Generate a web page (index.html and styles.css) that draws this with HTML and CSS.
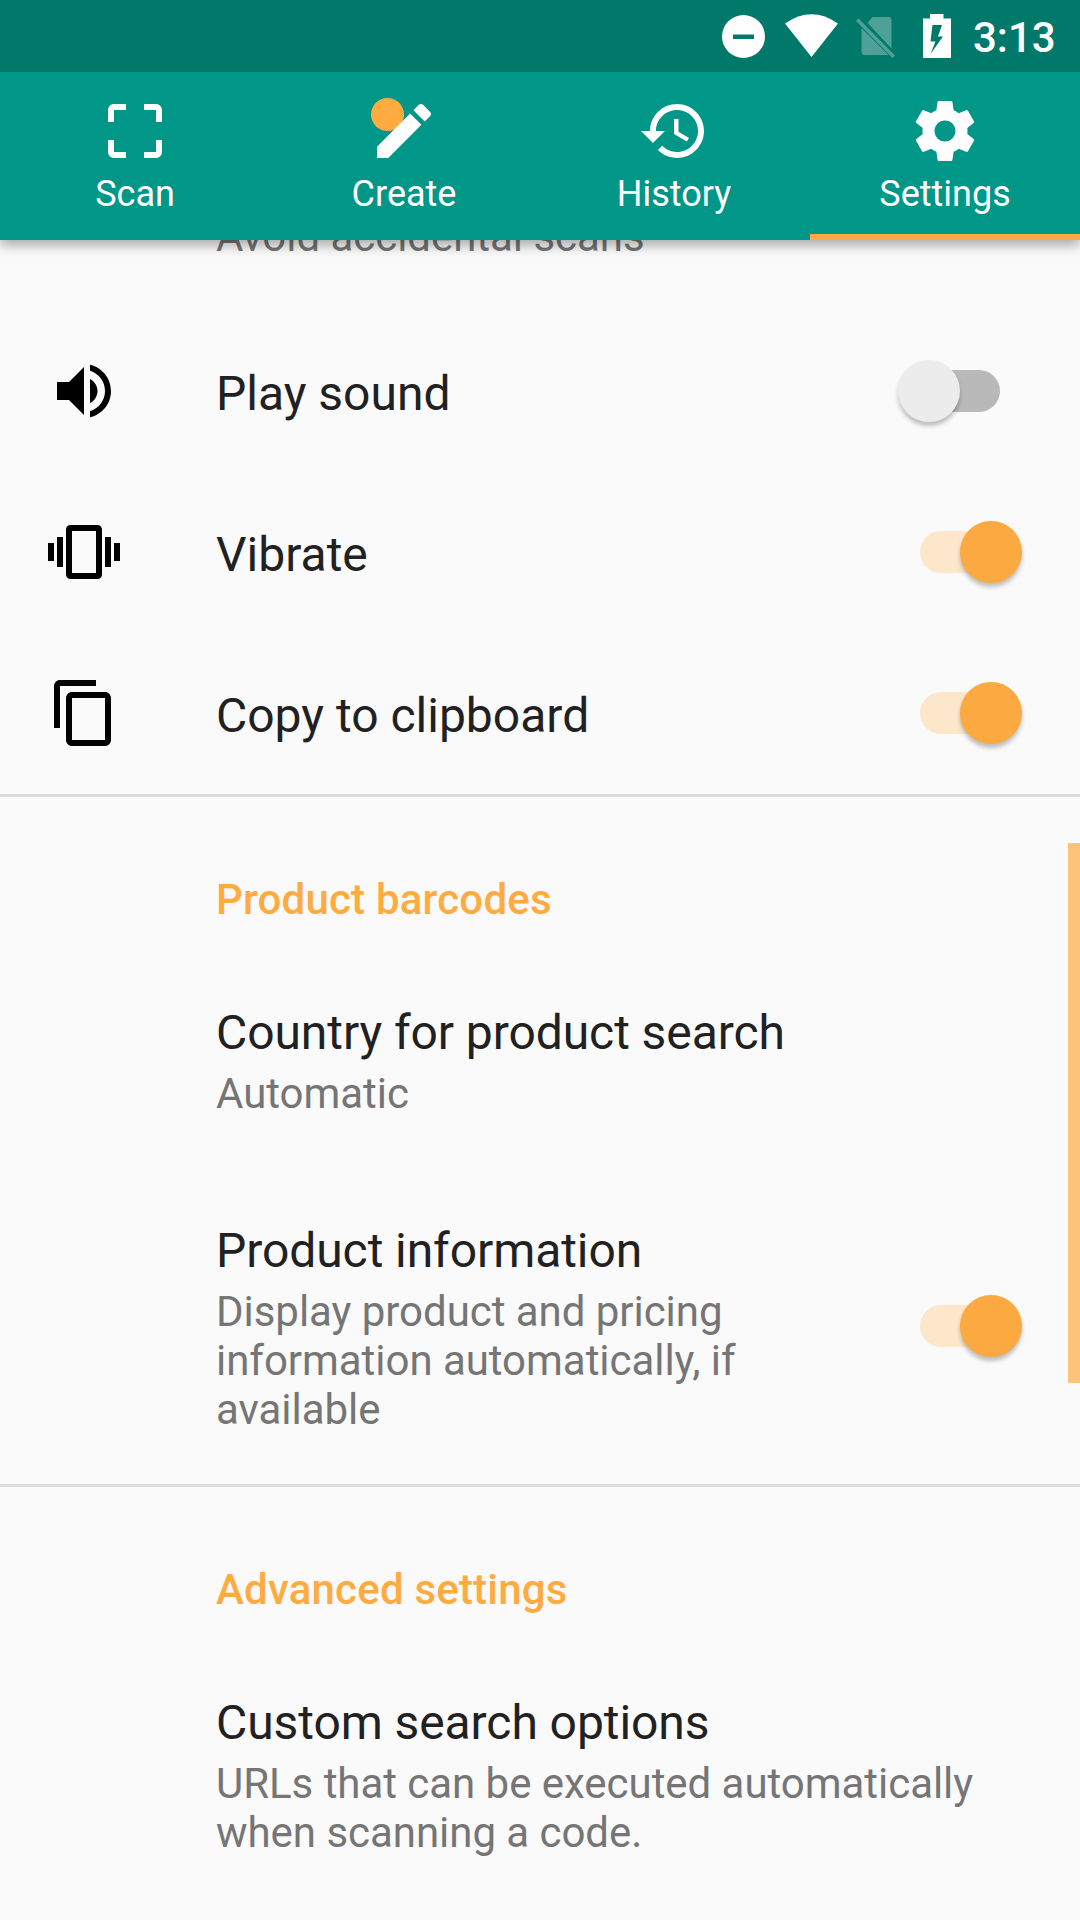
FILE: index.html
```html
<!DOCTYPE html>
<html lang="en">
<head>
<meta charset="utf-8">
<title>Settings</title>
<link rel="stylesheet" href="styles.css">
</head>
<body>
<div class="screen">
  <header class="top">
    <div class="status">
      <svg class="status-icons" width="240" height="72" viewBox="720 0 240 72" fill="#fff">
        <path fill-rule="evenodd" d="M743.5 15a21.5 21.5 0 1 0 0 43a21.5 21.5 0 1 0 0-43zM733 34.5h21v4.500h-21z"/>
        <path d="M785 23.500Q811.500 5 838 23.500L811.500 57z"/>
        <g fill="#4fa197">
          <path d="M872.500 17H888.500Q891.500 17 891.500 20V48.500L867.500 23z"/>
          <path d="M861.500 28L888.500 55H865Q861.500 55 861.500 51.500z"/>
          <path d="M858.500 18.500L895 55.500L892.500 58L856 21z"/>
        </g>
        <path fill-rule="evenodd" d="M930 14H943.500V18.500H951V58H923V18.500H930zM932.500 25L930.500 41.500H935.500L930.500 54L943 36.500H938L942 25z"/>
      </svg>
      <span class="clock">3:13</span>
    </div>
    <nav class="tabs">
      <a class="tab">
        <svg class="icon" viewBox="0 0 24 24"><path d="M3 5v4h2V5h4V3H5c-1.100 0-2 .9-2 2zm2 10H3v4c0 1.100.9 2 2 2h4v-2H5v-4zm14 4h-4v2h4c1.100 0 2-.9 2-2v-4h-2v4zm0-16h-4v2h4v4h2V5c0-1.100-.9-2-2-2z"/></svg>
        <span class="label">Scan</span>
      </a>
      <a class="tab middle">
        <svg class="icon" viewBox="0 0 24 24"><circle class="dot" cx="6.500" cy="6.500" r="5.500"/><path d="M3 17.250V21h3.750L17.810 9.940l-3.750-3.750L3 17.250zM20.710 7.040c.39-.39.39-1.020 0-1.410l-2.340-2.340c-.39-.39-1.020-.39-1.410 0l-1.830 1.830 3.750 3.750 1.830-1.830z"/></svg>
        <span class="label">Create</span>
      </a>
      <a class="tab middle">
        <svg class="icon" viewBox="0 0 24 24"><path d="M13 3c-4.970 0-9 4.030-9 9H1l3.890 3.890.07.14L9 12H6c0-3.870 3.130-7 7-7s7 3.130 7 7-3.130 7-7 7c-1.930 0-3.680-.79-4.940-2.060l-1.420 1.420C8.270 19.990 10.510 21 13 21c4.970 0 9-4.030 9-9s-4.030-9-9-9zm-1 5v5l4.280 2.540.72-1.210-3.500-2.080V8H12z"/></svg>
        <span class="label">History</span>
      </a>
      <a class="tab active">
        <svg class="icon" viewBox="0 0 24 24"><path d="M19.430 12.980c.04-.32.07-.64.07-.98s-.03-.66-.07-.98l2.110-1.650c.19-.15.24-.42.12-.64l-2-3.460c-.12-.22-.39-.3-.61-.22l-2.490 1c-.52-.4-1.080-.73-1.690-.98l-.38-2.650C14.460 2.180 14.250 2 14 2h-4c-.25 0-.46.18-.49.42l-.38 2.650c-.61.25-1.170.59-1.690.98l-2.490-1c-.23-.09-.49 0-.61.22l-2 3.460c-.13.22-.07.49.12.64l2.110 1.650c-.04.32-.07.65-.07.98s.03.66.07.98l-2.110 1.650c-.19.15-.24.42-.12.64l2 3.460c.12.22.39.3.61.22l2.490-1c.52.4 1.080.73 1.690.98l.38 2.650c.03.24.24.42.49.42h4c.25 0 .46-.18.49-.42l.38-2.650c.61-.25 1.170-.59 1.690-.98l2.490 1c.23.09.49 0 .61-.22l2-3.460c.12-.22.07-.49-.12-.64l-2.110-1.650zM12 15.500c-1.930 0-3.500-1.570-3.500-3.500s1.570-3.500 3.500-3.500 3.500 1.570 3.500 3.500-1.570 3.500-3.500 3.500z"/></svg>
        <span class="label">Settings</span>
      </a>
    </nav>
  </header>

  <main class="list">
    <p class="summary cut">Avoid accidental scans</p>

    <section class="group">
      <div class="row">
        <svg class="icon" viewBox="0 0 24 24"><path d="M3 9v6h4l5 5V4L7 9H3zm13.500 3c0-1.770-1.020-3.290-2.500-4.030v8.050c1.480-.73 2.500-2.250 2.500-4.020zM14 3.230v2.060c2.890.86 5 3.540 5 6.710s-2.110 5.850-5 6.710v2.060c4.010-.91 7-4.490 7-8.770s-2.990-7.860-7-8.770z"/></svg>
        <span class="title">Play sound</span>
        <span class="switch"><span class="thumb"></span></span>
      </div>
      <div class="row">
        <svg class="icon" viewBox="0 0 24 24"><path d="M0 15h2V9H0v6zm3 2h2V7H3v10zm19-8v6h2V9h-2zm-3 8h2V7h-2v10zM16.500 3h-9C6.670 3 6 3.670 6 4.500v15c0 .83.67 1.500 1.500 1.500h9c.83 0 1.500-.67 1.500-1.500v-15c0-.83-.67-1.500-1.500-1.500zM16 19H8V5h8v14z"/></svg>
        <span class="title">Vibrate</span>
        <span class="switch on"><span class="thumb"></span></span>
      </div>
      <div class="row">
        <svg class="icon" viewBox="0 0 24 24"><path d="M16 1H4c-1.100 0-2 .9-2 2v14h2V3h12V1zm3 4H8c-1.100 0-2 .9-2 2v14c0 1.100.9 2 2 2h11c1.100 0 2-.9 2-2V7c0-1.100-.9-2-2-2zm0 16H8V7h11v14z"/></svg>
        <span class="title">Copy to clipboard</span>
        <span class="switch on"><span class="thumb"></span></span>
      </div>
    </section>

    <section class="group divided">
      <h2 class="heading">Product barcodes</h2>
      <div class="item">
        <div class="text">
          <span class="title">Country for product search</span>
          <p class="summary">Automatic</p>
        </div>
      </div>
      <div class="item">
        <div class="text">
          <span class="title">Product information</span>
          <p class="summary">Display product and pricing information automatically, if available</p>
        </div>
        <span class="switch on"><span class="thumb"></span></span>
      </div>
    </section>

    <section class="group divided">
      <h2 class="heading">Advanced settings</h2>
      <div class="item">
        <div class="text">
          <span class="title">Custom search options</span>
          <p class="summary">URLs that can be executed automatically when scanning a code.</p>
        </div>
      </div>
    </section>
  </main>
  <div class="scrollbar"></div>
</div>
</body>
</html>
```
FILE: styles.css
```css
* { box-sizing: border-box; margin: 0; padding: 0; }

body {
  background: #fafafa;
  font-family: Roboto, "Liberation Sans", sans-serif;
  color: #212121;
}

.screen {
  position: relative;
  display: flex;
  flex-direction: column;
  width: 1080px;
  height: 1920px;
  overflow: hidden;
}

/* status bar and tabs */
.top {
  position: relative;
  z-index: 1;
  flex: none;
  color: #fff;
  box-shadow: 0 5px 12px rgba(0, 0, 0, .34);
}

.status {
  display: flex;
  justify-content: flex-end;
  height: 72px;
  padding-right: 23px;
  background: #00796b;
}

.status-icons { margin-right: 13px; }

.clock {
  width: 84px;
  font-size: 42px;
  font-weight: 500;
  line-height: 76px;
  white-space: nowrap;
}

.tabs {
  display: grid;
  grid-template-columns: repeat(4, 1fr);
  height: 168px;
  background: #009688;
}

.tab {
  display: flex;
  flex-direction: column;
  align-items: center;
  padding-top: 23px;
  border-bottom: 6px solid transparent;
}

.tab.middle { padding-right: 2px; }
.tab.active { border-bottom-color: #ffab40; }

.icon { display: block; width: 72px; height: 72px; flex: none; }
.tab .icon { fill: #fff; }
.tab .dot { fill: #ffab40; }

.label { margin-top: 6px; font-size: 36px; line-height: 42px; }

/* preference list */
.list { flex: 1; min-height: 0; }

.title { display: block; font-size: 48px; line-height: 56px; }
.summary { font-size: 42px; line-height: 49px; letter-spacing: -.04px; color: #757575; }
.cut { height: 71px; margin-left: 216px; margin-top: -28px; margin-bottom: 28px; }

.row {
  display: flex;
  align-items: center;
  height: 161px;
  padding: 0 80px 1px 48px;
}

.row .title { flex: 1; margin-left: 96px; padding-top: 6px; }

.divided { border-top: 3px solid #dcdcdc; }

.heading {
  padding: 78px 0 0 216px;
  font-size: 42px;
  font-weight: 500;
  line-height: 49px;
  letter-spacing: .2px;
  color: #ffab40;
}

.item {
  display: flex;
  align-items: center;
  padding: 55px 80px 50px 216px;
}

.heading + .item { padding-top: 81px; }
.item .text { flex: 1; }
.item .title { letter-spacing: -.08px; }
.item .summary { margin-top: 8px; }
.item .switch { margin: 0 0 5px 104px; }

/* switches */
.switch {
  display: flex;
  align-items: center;
  flex: none;
  width: 80px;
  height: 42px;
  border-radius: 21px;
  background: #b9b9b9;
}

.switch .thumb {
  flex: none;
  width: 62px;
  height: 62px;
  margin-left: -22px;
  border-radius: 50%;
  background: #ececec;
  box-shadow: 0 4px 4px rgba(0, 0, 0, .24);
}

.switch.on { background: #fde7cb; }
.switch.on .thumb { margin-left: 40px; background: #fba940; }

.scrollbar {
  position: absolute;
  top: 843px;
  right: 0;
  width: 12px;
  height: 540px;
  background: #fdc379;
}
```
